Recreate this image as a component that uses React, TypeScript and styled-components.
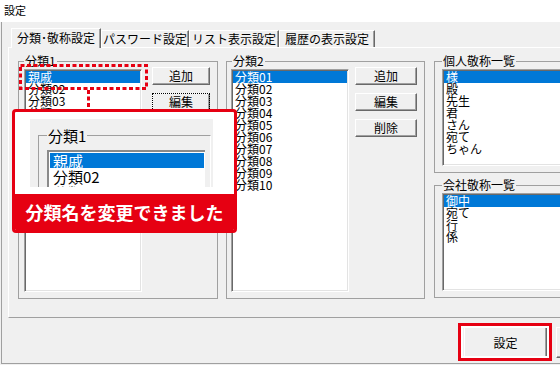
import React from "react";
import styled, { createGlobalStyle } from "styled-components";

const RED = "#e60012";

const GlobalStyle = createGlobalStyle`
  html, body { margin: 0; padding: 0; }
  body {
    width: 560px; height: 365px; overflow: hidden;
    background: #f0f0f0;
    font-family: "Noto Sans CJK JP", "Noto Sans", sans-serif;
    font-size: 12px; color: #000;
  }
`;

const Screen = styled.div`
  position: relative;
  width: 560px;
  height: 365px;
  overflow: hidden;
  background: #f0f0f0;
`;

const TitleBar = styled.div`
  box-sizing: border-box;
  height: 22px;
  width: 660px;
  padding-left: 4px;
  background: #fff;
  font-size: 11px;
  line-height: 20px;
`;

const Frame = styled.div`
  box-sizing: border-box;
  margin-left: 1px;
  width: 646px;
  height: 342px;
  border-left: 1px solid #a0a0a0;
  border-bottom: 1px solid #a0a0a0;
  padding: 6px 8px 0 6px;
  display: flex;
  flex-direction: column;
`;

const TabStrip = styled.div`
  display: flex;
  align-items: flex-end;
  height: 19px;
  padding-left: 3px;
`;

const Tab = styled.div<{ $active?: boolean; $w: number }>`
  box-sizing: border-box;
  position: relative;
  z-index: ${(p) => (p.$active ? 2 : 0)};
  width: ${(p) => p.$w}px;
  height: ${(p) => (p.$active ? 20 : 17)}px;
  margin-bottom: ${(p) => (p.$active ? -1 : 0)}px;
  background: #f0f0f0;
  border-top: 1px solid #fff;
  border-left: 1px solid #fff;
  border-right: 1px solid #696969;
  box-shadow: inset -1px 0 0 #a0a0a0;
  display: flex;
  align-items: center;
  justify-content: center;
  padding-bottom: ${(p) => (p.$active ? 2 : 0)}px;
  font-size: 12px;
  line-height: 12px;
  white-space: nowrap;
`;

const Panel = styled.div`
  box-sizing: border-box;
  height: 271px;
  border-top: 1px solid #fff;
  border-left: 1px solid #fff;
  border-right: 1px solid #696969;
  border-bottom: 1px solid #a0a0a0;
  padding: 7px 0 0 9px;
  display: flex;
  gap: 8px;
  align-items: flex-start;
`;

const Group = styled.fieldset<{ $w: number; $pl: number }>`
  box-sizing: border-box;
  width: ${(p) => p.$w}px;
  min-width: 0;
  margin: 0;
  padding: 0 6px 6px ${(p) => p.$pl}px;
  border: 1px solid #a0a0a0;
  display: flex;
  align-items: flex-start;
`;

const Legend = styled.legend<{ $ml: number }>`
  padding: 0 1px;
  margin-left: ${(p) => p.$ml}px;
  height: 12px;
  font-size: 12px;
  line-height: 12px;
  white-space: nowrap;
`;

const Column = styled.div<{ $w: number }>`
  display: flex;
  flex-direction: column;
  gap: 6px;
  width: ${(p) => p.$w}px;
  margin-left: 1px;
`;

const ListBox = styled.div<{ $w: number; $h: number }>`
  box-sizing: border-box;
  flex: none;
  width: ${(p) => p.$w}px;
  height: ${(p) => p.$h}px;
  margin-top: 2px;
  padding: 1px;
  background: #fff;
  border-top: 1px solid #a0a0a0;
  border-left: 1px solid #a0a0a0;
  border-right: 1px solid #fff;
  border-bottom: 1px solid #fff;
  box-shadow: inset 1px 1px 0 #696969, inset -1px -1px 0 #e3e3e3;
  overflow: hidden;
`;

const Item = styled.div<{ $sel?: boolean }>`
  height: 12px;
  line-height: 12px;
  padding-left: 2px;
  white-space: nowrap;
  background: ${(p) => (p.$sel ? "#0078d7" : "transparent")};
  color: ${(p) => (p.$sel ? "#fff" : "#000")};
`;

const ButtonCol = styled.div<{ $ml: number }>`
  display: flex;
  flex-direction: column;
  gap: 8px;
  margin-left: ${(p) => p.$ml}px;
`;

const Btn = styled.button<{ $w: number; $h?: number; $focus?: boolean }>`
  box-sizing: border-box;
  width: ${(p) => p.$w}px;
  height: ${(p) => p.$h ?? 18}px;
  margin: 0;
  padding: 0;
  font-family: inherit;
  font-size: 12px;
  line-height: 12px;
  color: #000;
  background: #f0f0f0;
  border-top: 1px solid #fff;
  border-left: 1px solid #fff;
  border-right: 1px solid #696969;
  border-bottom: 1px solid #696969;
  box-shadow: inset -1px -1px 0 #a0a0a0;
  outline: ${(p) => (p.$focus ? "1px dotted #000" : "none")};
  outline-offset: -1px;
`;

const Footer = styled.div`
  flex: 1;
  display: flex;
  justify-content: flex-end;
  align-items: flex-start;
  gap: 9px;
  padding-top: 9px;
`;

const BtnWrap = styled.div`
  position: relative;
  display: flex;
`;

const Highlight = styled.div`
  position: absolute;
  top: -4px;
  left: -6px;
  right: -5px;
  bottom: -3px;
  border: 3px solid ${RED};
  box-shadow: inset 0 0 0 2px #fff;
  pointer-events: none;
`;

/* ---- annotation overlays ---- */
const Marks = styled.svg`
  position: absolute;
  left: 0;
  top: 0;
  pointer-events: none;
  z-index: 5;
`;

const Callout = styled.div`
  position: absolute;
  left: 12px;
  top: 109px;
  width: 225px;
  height: 124px;
  box-sizing: border-box;
  border: 3px solid ${RED};
  border-radius: 4px;
  background: #fff;
  overflow: hidden;
  display: flex;
  flex-direction: column;
  z-index: 6;
`;

const ShotArea = styled.div`
  flex: 1;
  padding: 7px 21px 7px 15px;
`;

const Shot = styled.div`
  height: 68px;
  background: #f0f0f0;
  overflow: hidden;
  padding: 9px 0 0 8px;
  box-sizing: border-box;
`;

const ShotGroup = styled.fieldset`
  box-sizing: border-box;
  width: 173px;
  min-width: 0;
  margin: 0;
  padding: 0 0 0 8px;
  border: 1px solid #a0a0a0;
  border-right-color: #fff;
`;

const ShotLegend = styled.legend`
  padding: 0 1px;
  margin-left: 0;
  height: 15px;
  font-size: 15px;
  line-height: 15px;
`;

const ShotList = styled.div`
  box-sizing: border-box;
  width: 158px;
  height: 60px;
  margin-top: 7px;
  padding: 1px;
  background: #fff;
  border-top: 2px solid #8a8a8a;
  border-left: 2px solid #8a8a8a;
`;

const ShotItem = styled.div<{ $sel?: boolean }>`
  height: 15px;
  line-height: 15px;
  font-size: 15px;
  padding-left: 3px;
  margin-bottom: 1px;
  white-space: nowrap;
  background: ${(p) => (p.$sel ? "#0078d7" : "transparent")};
  color: ${(p) => (p.$sel ? "#fff" : "#000")};
`;

const Banner = styled.div`
  height: 36px;
  background: ${RED};
  color: #fff;
  font-weight: 700;
  font-size: 18px;
  line-height: 36px;
  text-align: center;
  white-space: nowrap;
`;

const list1 = ["親戚", "分類02", "分類03", "分類04", "分類05", "分類06", "分類07", "分類08", "分類09", "分類10"];
const list2 = ["分類01", "分類02", "分類03", "分類04", "分類05", "分類06", "分類07", "分類08", "分類09", "分類10"];
const personal = ["様", "殿", "先生", "君", "さん", "宛て", "ちゃん"];
const company = ["御中", "宛て", "行", "係"];

const tabs = [
  { label: "分類･敬称設定", w: 90, active: true },
  { label: "パスワード設定", w: 88 },
  { label: "リスト表示設定", w: 90 },
  { label: "履歴の表示設定", w: 96 },
];

export default function App() {
  return (
    <Screen>
      <GlobalStyle />
      <TitleBar>設定</TitleBar>
      <Frame>
        <TabStrip>
          {tabs.map((t) => (
            <Tab key={t.label} $w={t.w} $active={t.active}>
              {t.label}
            </Tab>
          ))}
        </TabStrip>
        <Panel>
          <Group $w={200} $pl={5}>
            <Legend $ml={0}>分類1</Legend>
            <ListBox $w={118} $h={223}>
              {list1.map((s, i) => (
                <Item key={s} $sel={i === 0}>{s}</Item>
              ))}
            </ListBox>
            <ButtonCol $ml={10}>
              <Btn $w={58}>追加</Btn>
              <Btn $w={58} $focus>編集</Btn>
            </ButtonCol>
          </Group>
          <Group $w={199} $pl={4}>
            <Legend $ml={1}>分類2</Legend>
            <ListBox $w={118} $h={223}>
              {list2.map((s, i) => (
                <Item key={s} $sel={i === 0}>{s}</Item>
              ))}
            </ListBox>
            <ButtonCol $ml={6}>
              <Btn $w={62}>追加</Btn>
              <Btn $w={62}>編集</Btn>
              <Btn $w={62}>削除</Btn>
            </ButtonCol>
          </Group>
          <Column $w={190}>
            <Group $w={190} $pl={7}>
              <Legend $ml={0}>個人敬称一覧</Legend>
              <ListBox $w={170} $h={97}>
                {personal.map((s, i) => (
                  <Item key={s} $sel={i === 0}>{s}</Item>
                ))}
              </ListBox>
            </Group>
            <Group $w={190} $pl={7}>
              <Legend $ml={0}>会社敬称一覧</Legend>
              <ListBox $w={170} $h={98}>
                {company.map((s, i) => (
                  <Item key={s} $sel={i === 0}>{s}</Item>
                ))}
              </ListBox>
            </Group>
          </Column>
        </Panel>
        <Footer>
          <BtnWrap>
            <Btn $w={83} $h={31}>設定</Btn>
            <Highlight />
          </BtnWrap>
          <Btn $w={83} $h={31}>キャンセル</Btn>
        </Footer>
      </Frame>

      <Marks width="560" height="365" viewBox="0 0 560 365">
        <rect x="20.5" y="65.5" width="126" height="23" fill="none" stroke={RED} strokeWidth="3" strokeDasharray="4 2.5" />
        <line x1="88.5" y1="90" x2="88.5" y2="109" stroke={RED} strokeWidth="3" strokeDasharray="4 2.5" />
      </Marks>

      <Callout>
        <ShotArea>
          <Shot>
            <ShotGroup>
              <ShotLegend>分類1</ShotLegend>
              <ShotList>
                <ShotItem $sel>親戚</ShotItem>
                <ShotItem>分類02</ShotItem>
                <ShotItem>分類03</ShotItem>
              </ShotList>
            </ShotGroup>
          </Shot>
        </ShotArea>
        <Banner>分類名を変更できました</Banner>
      </Callout>
    </Screen>
  );
}
